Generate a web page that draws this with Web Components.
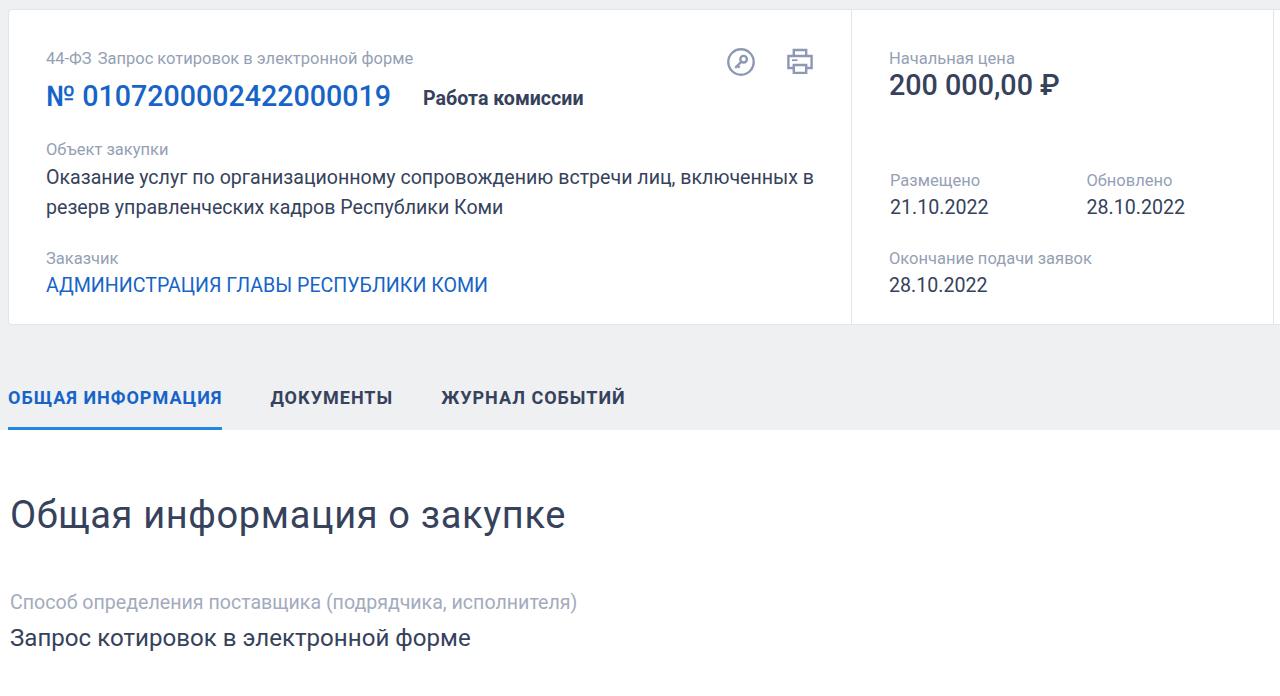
<!DOCTYPE html>
<html lang="ru">
<head>
<meta charset="utf-8">
<title>Закупка</title>
<style>
  html, body { margin: 0; padding: 0; height: 696px; overflow: hidden; background: #fff; }
  body { font-family: Roboto, "Liberation Sans", sans-serif; color: #36425c; }
</style>
</head>
<body>
<purchase-card></purchase-card>
<tab-bar></tab-bar>
<info-section></info-section>

<script>
// Подпись и значение
class InfoField extends HTMLElement {
  constructor() {
    super();
    this.attachShadow({ mode: "open" });
    this.shadowRoot.innerHTML = `
      <style>
        :host { display: block; }
        .label { font-size: 16.5px; line-height: 20px; color: #959fb5; }
        .value { font-size: 19.6px; line-height: 30px; color: #36425c; margin-top: var(--value-gap, 2px); }
        :host([link]) .value { color: #1664c8; }
      </style>
      <div class="label"></div>
      <div class="value"><slot></slot></div>
    `;
    this.shadowRoot.querySelector(".label").textContent = this.getAttribute("label");
  }
}
customElements.define("info-field", InfoField);

// Карточка закупки
class PurchaseCard extends HTMLElement {
  constructor() {
    super();
    this.attachShadow({ mode: "open" });
    this.shadowRoot.innerHTML = `
      <style>
        :host { display: block; background: #eef0f2; padding: 9px 0 0 8px; height: 378px; box-sizing: border-box; }
        .card { display: grid; grid-template-columns: 843px 422px 1fr; height: 316px; box-sizing: border-box;
          background: #fff; border: 1px solid #e2e6ec; border-right: 0; border-radius: 4px 0 0 4px; }
        .main { padding: 39px 30px 0 37px; border-right: 1px solid #e2e6ec; }
        .side { padding: 39px 0 0 37px; border-right: 1px solid #e2e6ec; }
        .top { display: flex; justify-content: space-between; }
        .law { font-size: 16.5px; line-height: 20px; color: #959fb5; }
        .law span { margin-right: 6px; }
        .num { display: flex; align-items: flex-start; margin-top: 10px; }
        .num a { font-size: 28.6px; line-height: 34px; font-weight: 500; color: #1664c8; text-decoration: none; }
        .num b { font-size: 19.6px; line-height: 26px; font-weight: 700; margin: 7px 0 0 32px; color: #36425c; }
        .icons { display: flex; gap: 32px; height: 30px; align-items: flex-start; margin: -1px 8px 0 0; }
        .object { margin-top: 27px; --value-gap: 3px; }
        .customer { margin-top: 26px; }
        .price-label { font-size: 16.5px; line-height: 20px; color: #959fb5; }
        .price { font-size: 28.7px; line-height: 34px; font-weight: 500; color: #36425c; margin-top: -1px; }
        .dates { display: grid; grid-template-columns: 196.5px 1fr; padding-left: 1px; margin-top: 69px; }
        .end { margin-top: 26px; }
      </style>
      <div class="card">
        <div class="main">
          <div class="top">
            <div>
              <div class="law"><span>44-ФЗ</span>Запрос котировок в электронной форме</div>
              <div class="num"><a>№ 0107200002422000019</a><b>Работа комиссии</b></div>
            </div>
            <div class="icons">
              <svg width="28" height="28" viewBox="0 0 28 28" fill="none" stroke="#8d98b3">
                <circle cx="14" cy="14" r="12.7" stroke-width="2.4"/>
                <circle cx="16.6" cy="11.2" r="3.3" stroke-width="2.4"/>
                <path d="M14.2 13.8 L8.2 19.8 M10.6 17.6 L12.6 19.6" stroke-width="2.4"/>
              </svg>
              <svg width="26" height="26" viewBox="0 0 26 26" fill="none" stroke="#8d98b3" stroke-width="2.4">
                <path d="M6.8 8 V2 H19.2 V8"/>
                <path d="M6.8 20 H1.4 V8 H24.6 V20 H19.2"/>
                <path d="M6.8 17 H19.2 V25 H6.8 Z"/>
                <path d="M5 12.2 H10.5" stroke-width="1.8"/>
              </svg>
            </div>
          </div>
          <info-field class="object" label="Объект закупки">Оказание услуг по организационному сопровождению встречи лиц, включенных в резерв управленческих кадров Республики Коми</info-field>
          <info-field class="customer" label="Заказчик" link>АДМИНИСТРАЦИЯ ГЛАВЫ РЕСПУБЛИКИ КОМИ</info-field>
        </div>
        <div class="side">
          <div class="price-label">Начальная цена</div>
          <div class="price">200 000,00 ₽</div>
          <div class="dates">
            <info-field label="Размещено">21.10.2022</info-field>
            <info-field label="Обновлено">28.10.2022</info-field>
          </div>
          <info-field class="end" label="Окончание подачи заявок">28.10.2022</info-field>
        </div>
      </div>
    `;
  }
}
customElements.define("purchase-card", PurchaseCard);

// Вкладки (фон полосы продолжает фон карточки)
class TabBar extends HTMLElement {
  constructor() {
    super();
    this.attachShadow({ mode: "open" });
    this.shadowRoot.innerHTML = `
      <style>
        :host { display: flex; gap: 48px; background: #eef0f2; padding-left: 8px; height: 52px; box-sizing: border-box; }
        a { display: block; font-size: 18px; line-height: 40px; font-weight: 700; letter-spacing: 1px; color: #36425c; height: 52px; box-sizing: border-box; }
        a.active { color: #1664c8; border-bottom: 3px solid #2088e0; }
      </style>
      <a class="active">ОБЩАЯ ИНФОРМАЦИЯ</a>
      <a>ДОКУМЕНТЫ</a>
      <a>ЖУРНАЛ СОБЫТИЙ</a>
    `;
  }
}
customElements.define("tab-bar", TabBar);

// Раздел с общей информацией
class InfoSection extends HTMLElement {
  constructor() {
    super();
    this.attachShadow({ mode: "open" });
    this.shadowRoot.innerHTML = `
      <style>
        :host { display: block; padding: 61px 0 0 10px; }
        h1 { margin: 0; font-size: 38px; line-height: 48px; font-weight: 400; color: #36425c; letter-spacing: 0.65px; }
        .label { font-size: 19.6px; line-height: 24px; color: #a3abbd; margin-top: 52px; }
        .value { font-size: 24.1px; line-height: 32px; color: #36425c; margin-top: 7px; }
      </style>
      <h1>Общая информация о закупке</h1>
      <div class="label">Способ определения поставщика (подрядчика, исполнителя)</div>
      <div class="value">Запрос котировок в электронной форме</div>
    `;
  }
}
customElements.define("info-section", InfoSection);
</script>
</body>
</html>
